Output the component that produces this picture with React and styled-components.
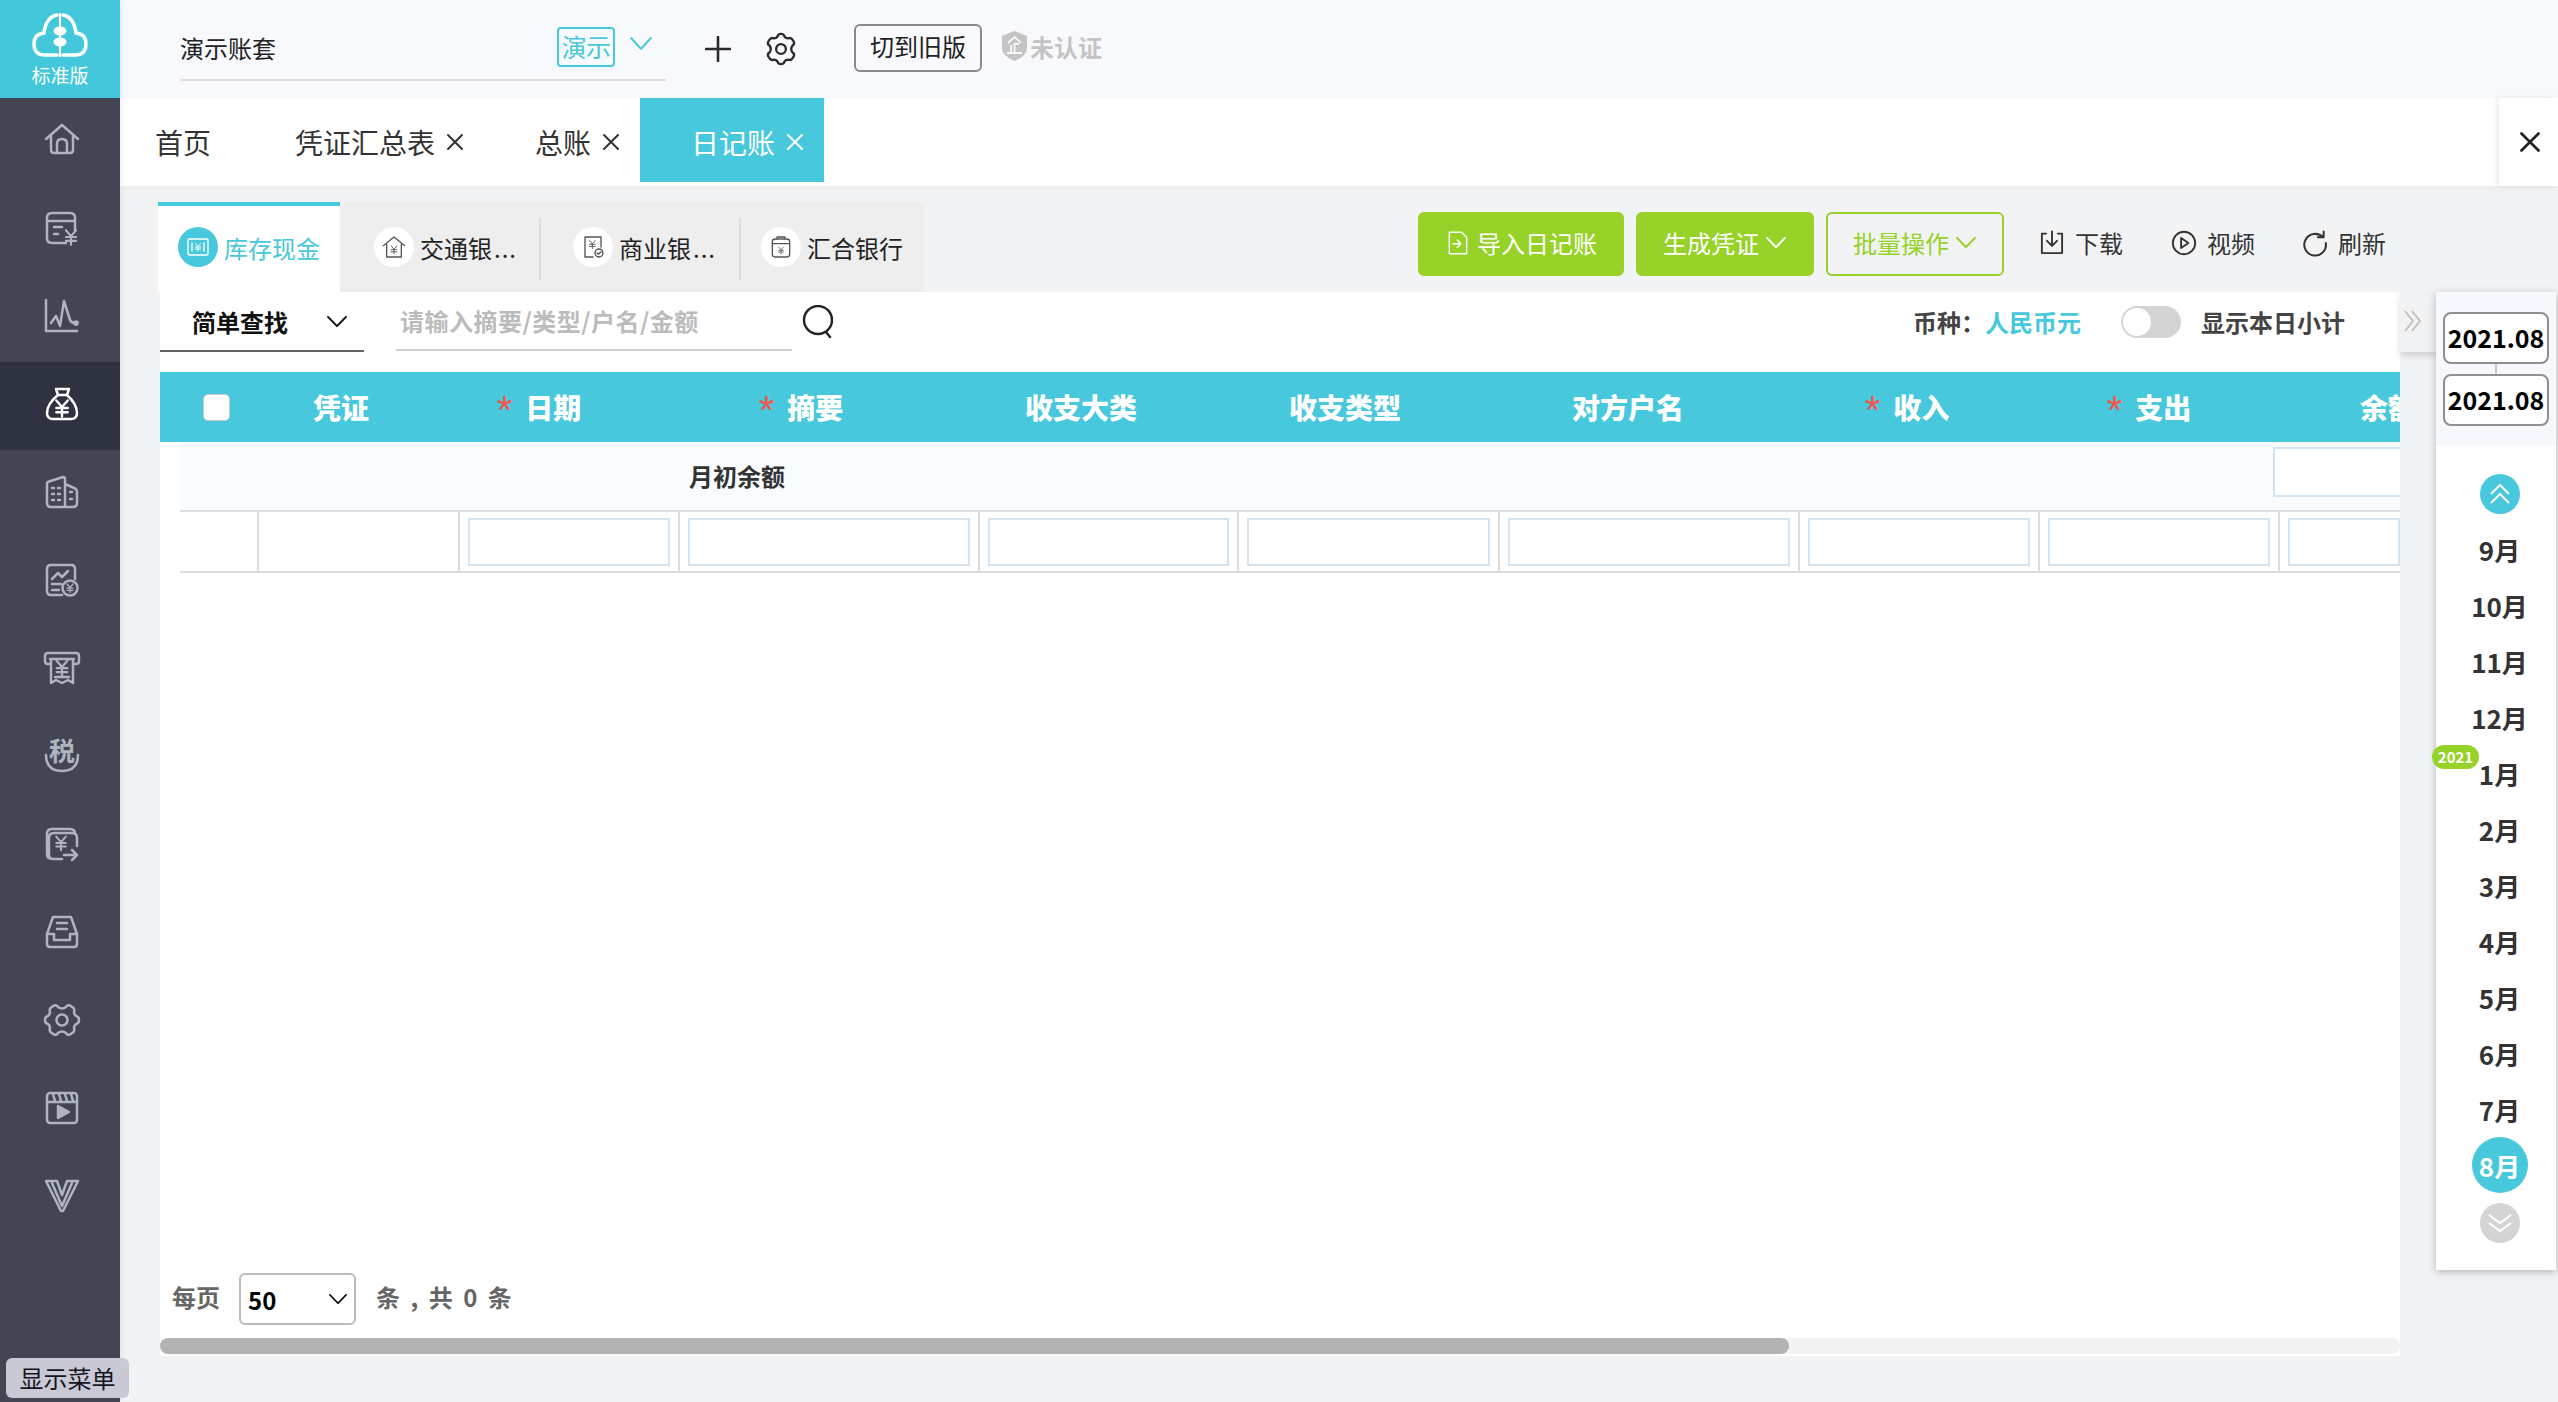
import React from 'react';
import styled, { createGlobalStyle } from 'styled-components';

const TEAL = '#47c8dc';
const GREEN = '#96d227';

const Global = createGlobalStyle`
  html, body { margin: 0; padding: 0; background: #f2f3f5; }
  * { box-sizing: border-box; }
  body { font-family: "Noto Sans CJK SC", "Noto Sans", sans-serif; color: #333; }
`;

const Page = styled.div`
  position: relative;
  display: flex;
  width: 2558px;
  height: 1402px;
  overflow: hidden;
  background: #f2f3f5;
`;

/* ---------- sidebar ---------- */
const Sidebar = styled.aside`
  width: 120px;
  flex: none;
  background: #434454;
  display: flex;
  flex-direction: column;
  box-shadow: 2px 0 6px rgba(0, 0, 0, 0.06);
  z-index: 2;
`;
const LogoBox = styled.div`
  height: 98px;
  background: #43c7db;
  color: #fff;
  display: flex;
  flex-direction: column;
  align-items: center;
  padding-top: 13px;
`;
const LogoText = styled.div`
  font-size: 19px;
  line-height: 24px;
  margin-top: 6px;
`;
const NavItem = styled.div`
  height: 88px;
  display: flex;
  align-items: center;
  justify-content: center;
  padding: 0 0 4px 3px;
  background: ${(p) => (p.$active ? '#2f3240' : 'transparent')};
  color: ${(p) => (p.$active ? '#ffffff' : '#aeb4c0')};
`;
const ShowMenu = styled.div`
  position: absolute;
  left: 6px;
  top: 1358px;
  width: 123px;
  height: 40px;
  border-radius: 6px;
  background: #c9c9d5;
  color: #15151f;
  font-size: 24px;
  line-height: 40px;
  text-align: center;
  z-index: 3;
`;

/* ---------- main ---------- */
const Main = styled.div`
  flex: 1;
  min-width: 0;
  display: flex;
  flex-direction: column;
`;
const TopBar = styled.header`
  height: 98px;
  flex: none;
  background: #f8f9fd;
  display: flex;
  align-items: center;
  padding-left: 60px;
  color: #222;
`;
const Account = styled.div`
  width: 486px;
  height: 66px;
  border-bottom: 2px solid #dcdcdc;
  display: flex;
  align-items: center;
  font-size: 24px;
  margin-bottom: 2px;
`;
const AccountName = styled.span`
  flex: 1;
`;
const DemoBadge = styled.span`
  width: 58px;
  height: 40px;
  border: 2px solid ${TEAL};
  border-radius: 4px;
  color: ${TEAL};
  font-size: 25px;
  line-height: 34px;
  text-align: center;
  letter-spacing: -0.5px;
`;
const AccountChevron = styled.span`
  display: flex;
  width: 51px;
  justify-content: center;
  color: ${TEAL};
  padding-bottom: 8px;
`;
const TopIcon = styled.span`
  display: flex;
  margin-left: ${(p) => p.$ml}px;
  color: #2b2b2b;
`;
const OldButton = styled.div`
  margin-left: 57px;
  width: 128px;
  height: 48px;
  border: 2px solid #8a8a8a;
  border-radius: 6px;
  font-size: 24px;
  line-height: 40px;
  text-align: center;
  margin-bottom: 2px;
`;
const Cert = styled.div`
  margin-left: 20px;
  display: flex;
  align-items: center;
  gap: 3px;
  color: #c4c4c4;
  font-size: 24px;
  font-weight: 700;
  padding-bottom: 6px;
`;

const TabBar = styled.nav`
  position: relative;
  height: 88px;
  flex: none;
  background: #fff;
  display: flex;
  align-items: flex-start;
  box-shadow: 0 2px 6px rgba(0, 0, 0, 0.04);
  z-index: 1;
`;
const PageTab = styled.div`
  height: 84px;
  width: ${(p) => p.$w}px;
  padding-left: ${(p) => p.$pl}px;
  padding-top: 3px;
  display: flex;
  align-items: center;
  gap: 11px;
  font-size: 28px;
  background: ${(p) => (p.$active ? TEAL : 'transparent')};
  color: ${(p) => (p.$active ? '#fff' : '#333')};
`;
const TabClose = styled.div`
  margin-left: auto;
  width: 59px;
  height: 88px;
  display: flex;
  align-items: center;
  justify-content: center;
  color: #222;
  padding-left: 2px;
  box-shadow: -3px 0 5px rgba(0, 0, 0, 0.07);
`;

const Content = styled.div`
  flex: 1;
  min-height: 0;
  padding: 16px 0 0 38px;
  display: flex;
  flex-direction: column;
`;
const ToolRow = styled.div`
  width: 2242px;
  height: 90px;
  flex: none;
  display: flex;
  align-items: flex-start;
`;
const SubTabs = styled.div`
  width: 766px;
  height: 90px;
  background: #eeeeee;
  display: flex;
`;
const SubTab = styled.div`
  width: ${(p) => p.$w}px;
  height: 90px;
  padding-left: ${(p) => p.$pl}px;
  display: flex;
  align-items: center;
  gap: 6px;
  font-size: 24px;
  color: ${(p) => (p.$active ? TEAL : '#222')};
  background: ${(p) => (p.$active ? '#fff' : 'transparent')};
  border-top: 4px solid ${(p) => (p.$active ? TEAL : 'transparent')};
  padding-bottom: 4px;
  white-space: nowrap;
`;
const Dots = styled.span`
  letter-spacing: 1px;
  margin-left: -4px;
`;
const TabDivider = styled.span`
  width: 2px;
  height: 62px;
  flex: none;
  margin-top: 16px;
  background: #dcdcdc;
`;
const TabIconCircle = styled.span`
  width: 40px;
  height: 40px;
  flex: none;
  border-radius: 50%;
  display: flex;
  align-items: center;
  justify-content: center;
  background: ${(p) => (p.$active ? TEAL : '#fff')};
  color: ${(p) => (p.$active ? '#fff' : '#555')};
`;
const Actions = styled.div`
  margin-left: auto;
  padding: 10px 14px 0 0;
  display: flex;
  align-items: center;
  height: 74px;
`;
const Primary = styled.div`
  width: ${(p) => p.$w}px;
  height: 64px;
  margin-right: 12px;
  padding-bottom: 3px;
  border-radius: 6px;
  background: ${(p) => (p.$outline ? 'transparent' : GREEN)};
  border: 2px solid ${GREEN};
  color: ${(p) => (p.$outline ? GREEN : '#fff')};
  font-size: 24px;
  display: flex;
  align-items: center;
  justify-content: center;
  gap: 6px;
`;
const PlainAction = styled.div`
  margin-left: ${(p) => p.$ml}px;
  padding-bottom: 3px;
  display: flex;
  align-items: center;
  gap: 10px;
  font-size: 24px;
  color: #333;
`;

const BodyRow = styled.div`
  flex: 1;
  min-height: 0;
  display: flex;
  align-items: flex-start;
  padding-left: 2px;
`;
const Panel = styled.section`
  width: 2240px;
  height: 1064px;
  flex: none;
  background: #fff;
  display: flex;
  flex-direction: column;
  overflow: hidden;
`;
const SearchRow = styled.div`
  height: 80px;
  flex: none;
  display: flex;
  align-items: flex-start;
  font-weight: 700;
  font-size: 24px;
`;
const ModeSelect = styled.div`
  width: 204px;
  height: 60px;
  border-bottom: 2px solid #666;
  padding: 0 16px 0 32px;
  display: flex;
  align-items: center;
  justify-content: space-between;
  color: #111;
`;
const SearchInput = styled.div`
  margin-left: 32px;
  width: 396px;
  height: 59px;
  border-bottom: 2px solid #d0d0d0;
  padding-left: 4px;
  display: flex;
  align-items: center;
  color: #bcbcbc;
  white-space: nowrap;
  letter-spacing: 0.5px;
`;
const SearchIcon = styled.span`
  display: flex;
  margin: 13px 0 0 10px;
  color: #222;
`;
const Currency = styled.div`
  margin: 12px 0 0 auto;
  display: flex;
  align-items: center;
  height: 34px;
  color: #444;
  white-space: nowrap;
  padding-right: 55px;
`;
const CurrencyValue = styled.span`
  color: ${TEAL};
`;
const Toggle = styled.span`
  position: relative;
  width: 60px;
  height: 32px;
  margin: 1px 20px 0 40px;
  border-radius: 16px;
  background: #d4d4d4;
`;
const ToggleKnob = styled.span`
  position: absolute;
  left: 2px;
  top: 2px;
  width: 28px;
  height: 28px;
  border-radius: 50%;
  background: #fff;
`;
const HeadRow = styled.div`
  height: 70px;
  flex: none;
  background: ${TEAL};
  display: grid;
  grid-template-columns: 110px 142px 260px 264px 290px 238px 328px 236px 248px 224px;
  align-items: center;
  color: #fff;
  font-size: 28px;
  font-weight: 900;
  overflow: hidden;
  white-space: nowrap;
`;
const HeadCell = styled.div`
  display: flex;
  justify-content: center;
  align-items: center;
  gap: 7px;
`;
const Star = styled.span`
  color: #f2574f;
  font-family: "Liberation Sans", sans-serif;
  font-weight: 400;
  font-size: 40px;
  line-height: 28px;
  height: 28px;
  margin: 6px 6px 0 -6px;
`;
const Check = styled.span`
  width: 27px;
  height: 27px;
  border-radius: 5px;
  background: #fff;
  border: 1px solid #c8c8c8;
  margin-left: 3px;
`;
const BalanceRow = styled.div`
  height: 68px;
  flex: none;
  margin-left: 20px;
  background: #f8fcff;
  display: flex;
  align-items: flex-start;
  overflow: hidden;
`;
const BalanceLabel = styled.div`
  margin: 16px 0 0 509px;
  font-size: 24px;
  font-weight: 700;
  color: #333;
`;
const BalanceInput = styled.div`
  margin: 5px 0 0 auto;
  width: 127px;
  height: 50px;
  border: 2px solid #d3e3ef;
  border-right: none;
  background: #fff;
`;
const EntryRow = styled.div`
  height: 63px;
  flex: none;
  margin-left: 20px;
  border-top: 2px solid #ddd;
  border-bottom: 2px solid #ddd;
  display: grid;
  grid-template-columns: 79px 201px 220px 300px 259px 261px 300px 240px 240px 120px;
  overflow: hidden;
`;
const EntryCell = styled.div`
  border-right: 2px solid #ddd;
  padding: 6px 8px;
  &:first-child { padding: 0; }
  &:last-child { border-right: none; padding-right: 0; }
`;
const CellInput = styled.div`
  height: 48px;
  border: 2px solid #d3e3ef;
  background: #fff;
`;
const Spacer = styled.div`
  flex: 1;
`;
const Pager = styled.div`
  height: 52px;
  flex: none;
  display: flex;
  align-items: center;
  padding-left: 12px;
  font-size: 24px;
  font-weight: 700;
  color: #666;
  white-space: nowrap;
`;
const PageSelect = styled.div`
  width: 117px;
  height: 52px;
  margin: 0 20px 0 19px;
  border: 2px solid #bbb;
  border-radius: 6px;
  padding: 0 6px 0 7px;
  display: flex;
  align-items: center;
  justify-content: space-between;
  color: #000;
`;
const PagerText = styled.span`
  word-spacing: 4px;
  letter-spacing: 0.5px;
  margin-top: -5px;
`;
const PagerLabel = styled.span`
  margin-top: -5px;
`;
const ScrollTrack = styled.div`
  height: 16px;
  flex: none;
  margin-top: 13px;
  margin-bottom: 2px;
  border-radius: 8px;
  background: #f3f3f3;
`;
const ScrollThumb = styled.div`
  width: 1629px;
  height: 16px;
  border-radius: 8px;
  background: #b3b3b3;
`;
const Gutter = styled.div`
  width: 36px;
  flex: none;
  align-self: flex-start;
  height: 60px;
  background: #f1f2f4;
  color: #bdbdbd;
  display: flex;
  justify-content: flex-start;
  padding: 17px 0 0 3px;
  box-shadow: 0 4px 6px rgba(0, 0, 0, 0.14);
`;
const Calendar = styled.aside`
  position: relative;
  width: 120px;
  height: 978px;
  flex: none;
  background: #fff;
  box-shadow: 0 2px 8px rgba(0, 0, 0, 0.25);
  display: flex;
  flex-direction: column;
  align-items: center;
`;
const DateBox = styled.div`
  width: 100%;
  height: 154px;
  flex: none;
  background: #f7f8fd;
  padding: 20px 7px 0;
  display: flex;
  flex-direction: column;
  align-items: center;
`;
const DateInput = styled.div`
  width: 106px;
  height: 52px;
  border: 2px solid #8f8f8f;
  border-radius: 8px;
  background: #fff;
  color: #000;
  font-size: 25px;
  font-weight: 700;
  line-height: 46px;
  text-align: center;
  white-space: nowrap;
`;
const DateLink = styled.span`
  width: 2px;
  height: 10px;
  background: #c9c9c9;
`;
const MonthColumn = styled.div`
  padding-left: 7px;
  display: flex;
  flex-direction: column;
  align-items: center;
`;
const RoundBtn = styled.div`
  width: 40px;
  height: 40px;
  flex: none;
  margin-top: ${(p) => p.$mt}px;
  border-radius: 50%;
  background: ${(p) => p.$bg};
  color: #fff;
  display: flex;
  align-items: center;
  justify-content: center;
`;
const MonthList = styled.div`
  margin-top: 7px;
  display: flex;
  flex-direction: column;
  align-items: center;
`;
const Month = styled.div`
  width: 56px;
  height: 56px;
  border-radius: 50%;
  display: flex;
  align-items: center;
  justify-content: center;
  font-size: 26px;
  font-weight: 700;
  white-space: nowrap;
  background: ${(p) => (p.$active ? TEAL : 'transparent')};
  color: ${(p) => (p.$active ? '#fff' : '#333')};
`;
const YearBadge = styled.div`
  position: absolute;
  left: -4px;
  top: 453px;
  width: 47px;
  height: 24px;
  border-radius: 12px;
  background: ${GREEN};
  color: #fff;
  font-size: 15px;
  font-weight: 700;
  line-height: 23px;
  text-align: center;
`;

/* ---------- icons ---------- */
const Svg = ({ size = 36, sw = 2.5, children, w, h, vb, rotate }) => (
  <svg width={w || size} height={h || size} viewBox={vb || '0 0 36 36'} fill="none" stroke="currentColor"
    strokeWidth={sw} strokeLinecap="round" strokeLinejoin="round" overflow="visible"
    transform={rotate ? `rotate(${rotate})` : undefined}>
    {children}
  </svg>
);
const Yen = ({ x = 18, y = 18, s = 1 }) => (
  <path transform={`translate(${x} ${y}) scale(${s})`} d="M-6 -8 L0 -1 L6 -8 M0 -1 V9 M-6 0 H6 M-6 4.5 H6" />
);
const Home = () => (
  <Svg><path d="M2 17 L18 3 L34 17 M7 14 V28 Q7 31 10 31 H26 Q29 31 29 28 V14 M13 31 V22 Q13 17 18 17 Q23 17 23 22 V31" /></Svg>
);
const CardYen = () => (
  <Svg><path d="M22 33 H8 Q3 33 3 28 V8 Q3 3 8 3 H26 Q31 3 31 8 V21 M3 11 H31 M10 17 H18 M10 24 H14" /><Yen x={27} y={27} s={0.85} /></Svg>
);
const Pulse = () => (
  <Svg><path d="M2 2 V33 H33 M7 25 L12 18 L16 28 L20 3 L26 22 Q27 25 33 25" /><circle cx="32" cy="25" r="1.6" fill="currentColor" /></Svg>
);
const Bag = () => (
  <Svg><path d="M12 3 H25 L23 9 H14 Z M14 9 Q3 18 3 27 Q3 33 9 33 H27 Q33 33 33 27 Q33 18 23 9" /><Yen x={18} y={22} s={0.95} /></Svg>
);
const Buildings = () => (
  <Svg><path d="M3 10 Q3 8 5 7.5 L19 3 Q21 3 21 5 V33 H7 Q3 33 3 29 Z M21 10 L30 14 Q33 15 33 18 V29 Q33 33 29 33 H21 M8 14 H10 M14 14 H16 M8 20 H10 M14 20 H16 M8 26 H10 M14 26 H16 M26 18 H28 M26 25 H28" /></Svg>
);
const Report = () => (
  <Svg><path d="M18 33 H7 Q3 33 3 29 V7 Q3 3 7 3 H27 Q31 3 31 7 V17 M8 17 L14 11 L18 15 L24 9 M8 22 H17 M8 28 H15" /><circle cx="26" cy="26" r="7.5" /><Yen x={26} y={26} s={0.5} /></Svg>
);
const Receipt = () => (
  <Svg><path d="M6 14 H4 Q1 14 1 11 V6 Q1 3 4 3 H32 Q35 3 35 6 V11 Q35 14 32 14 H30 M6 9 H30 M7 9 V33 L12 30 L18 33 L24 30 L29 33 V9" /><Yen x={18} y={18} s={0.9} /><path d="M11 27 H25" /></Svg>
);
const TaxChar = styled.text`
  font-size: 26px;
  font-weight: 700;
  fill: currentColor;
  stroke: none;
  font-family: "Noto Sans CJK SC", sans-serif;
`;
const Tax = () => (
  <Svg><TaxChar x="18" y="23" textAnchor="middle">税</TaxChar><path d="M2 17 Q2 33 18 33 Q34 33 34 17" /></Svg>
);
const Transfer = () => (
  <Svg><path d="M9 33 Q3 33 3 28 V8 Q3 3 8 3 H26 Q31 3 31 8 M9 33 Q5 33 5 28 V12 Q5 7 10 7 H28 Q33 7 33 12 V20 M18 33 H9" /><Yen x={17} y={17} s={0.8} /><path d="M20 29 H33 M28 24 L33 29 L28 34" /></Svg>
);
const Tray = () => (
  <Svg><path d="M3 20 L9 3 H27 L33 20 V30 Q33 33 30 33 H6 Q3 33 3 30 Z M3 20 H10 V26 H26 V20 H33 M13 9 H23 M13 15 H23" /></Svg>
);
const Gear = ({ size = 36, sw = 2.5, rotate }) => (
  <Svg size={size} sw={sw} rotate={rotate}>
    <path d="M10 3.5 Q13 2.5 14 5 Q18 8 22 5 Q23 2.5 26 3.5 L29 5.5 Q31 7 30 10 Q30 13 33 14.5 Q35 15 35 18 Q35 21 33 21.5 Q30 23 30 26 Q31 29 29 30.5 L26 32.5 Q23 33.5 22 31 Q18 28 14 31 Q13 33.5 10 32.5 L7 30.5 Q5 29 6 26 Q6 23 3 21.5 Q1 21 1 18 Q1 15 3 14.5 Q6 13 6 10 Q5 7 7 5.5 Z" />
    <circle cx="18" cy="18" r="5.5" />
  </Svg>
);
const Clapper = () => (
  <Svg><rect x="3" y="3" width="30" height="30" rx="3" /><path d="M3 12 H33 M9 4 L11 11 M15 4 L17 11 M21 4 L23 11 M27 4 L29 11" /><path d="M14 16 L25 22 L14 28 Z" fill="currentColor" /></Svg>
);
const VLogo = () => (
  <Svg><path d="M2 3 H13 L18 17 L23 3 H34 L19 33 H17 Z M8 5 L18 28 L28 5" /></Svg>
);
const Cloud = () => (
  <svg width="56" height="44" viewBox="0 0 56 44" fill="none" stroke="#fff" strokeWidth="3.4" strokeLinecap="round">
    <path d="M25 42 H13 Q2 42 2 31 Q2 21 12 20 Q14 4 25 2 M31 2 Q42 4 44 20 Q54 21 54 31 Q54 42 43 42 H31" />
    <path d="M28 1 V43" strokeWidth="2.2" />
    <ellipse cx="28" cy="18" rx="6.5" ry="4.6" fill="#fff" stroke="none" />
    <ellipse cx="28" cy="29" rx="6.5" ry="4.6" fill="#fff" stroke="none" />
  </svg>
);
const Chevron = ({ w = 22, h = 14, sw = 2 }) => (
  <svg width={w} height={h} viewBox="0 0 22 14" fill="none" stroke="currentColor" strokeWidth={sw} strokeLinecap="round" strokeLinejoin="round" preserveAspectRatio="none">
    <path d="M2 2 L11 12 L20 2" />
  </svg>
);
const Plus = () => (
  <svg width="26" height="26" viewBox="0 0 26 26" stroke="currentColor" strokeWidth="2.6" strokeLinecap="round"><path d="M13 1 V25 M1 13 H25" /></svg>
);
const Cross = ({ s = 18, sw = 2 }) => (
  <svg width={s} height={s} viewBox="0 0 18 18" stroke="currentColor" strokeWidth={sw} strokeLinecap="round"><path d="M2 2 L16 16 M16 2 L2 16" /></svg>
);
const Shield = () => (
  <svg width="25" height="30" viewBox="0 0 25 30">
    <path d="M12.5 0 L25 5 V17 Q25 25 12.5 30 Q0 25 0 17 V5 Z" fill="#c4c4c4" />
    <path d="M6 12 L12.5 6 L19 12 M9 22 V14 M12.5 22 V13 H17 M5 22 H20" fill="none" stroke="#f8f9fd" strokeWidth="1.8" />
  </svg>
);
const ImportIcon = () => (
  <Svg size={26} sw={2}>
    <path d="M10 33 H6 V3 H23 L30 10 V33 H10 M11 19 H21 M17 14 L22 19 L17 24" />
  </Svg>
);
const DownloadIcon = () => (
  <Svg size={26} sw={2.6}><path d="M10 5 H4 V32 H32 V5 H26 M18 2 V22 M11 15 L18 22 L25 15" /></Svg>
);
const PlayIcon = () => (
  <Svg size={26} sw={2.6}><circle cx="18" cy="18" r="15.5" /><path d="M14 11 L24 18 L14 25 Z" /></Svg>
);
const RefreshIcon = () => (
  <Svg size={26} sw={2.8}><path d="M29 10 A15 15 0 1 0 33 18 M30 2 V10 H22" /></Svg>
);
const SearchGlyph = () => (
  <svg width="34" height="34" viewBox="0 0 34 34" fill="none" stroke="currentColor" strokeWidth="2.4" strokeLinecap="round"><circle cx="16" cy="15" r="14" /><path d="M24 27 L28 32" /></svg>
);
const DoubleUp = () => (
  <svg width="22" height="22" viewBox="0 0 22 22" fill="none" stroke="currentColor" strokeWidth="2"><path d="M2 11 L11 2 L20 11 M2 20 L11 11 L20 20" /></svg>
);
const DoubleDown = () => (
  <svg width="26" height="20" viewBox="0 0 26 20" fill="none" stroke="currentColor" strokeWidth="2"><path d="M2 2 L13 10 L24 2 M2 10 L13 18 L24 10" /></svg>
);
const DoubleRight = () => (
  <svg width="20" height="24" viewBox="0 0 20 24" fill="none" stroke="currentColor" strokeWidth="1.8"><path d="M2 2 L10 12 L2 22 M9 2 L17 12 L9 22" /></svg>
);
const CashIcon = () => (
  <Svg size={24} sw={2}><rect x="3" y="6" width="30" height="24" rx="2" /><path d="M9 12 V24 M27 12 V24" /><Yen x={18} y={18} s={0.7} /></Svg>
);
const HouseYen = () => (
  <Svg size={24} sw={2}><path d="M2 16 L18 3 L34 16 M7 14 V33 H29 V14" /><Yen x={18} y={22} s={0.7} /></Svg>
);
const BillIcon = () => (
  <Svg size={24} sw={2}><path d="M18 33 H6 V3 H30 V18" /><Yen x={17} y={14} s={0.7} /><circle cx="27" cy="27" r="6" /><path d="M24 27 L26 29 L30 25" /></Svg>
);
const BoxYen = () => (
  <Svg size={24} sw={2}><rect x="5" y="6" width="26" height="27" rx="4" /><path d="M5 13 H31 M12 6 V3 H24 V6" /><Yen x={18} y={23} s={0.6} /></Svg>
);

const NAV = [Home, CardYen, Pulse, Bag, Buildings, Report, Receipt, Tax, Transfer, Tray, Gear, Clapper, VLogo];
const HEADS = [
  { t: '凭证' }, { t: '日期', req: 1 }, { t: '摘要', req: 1 }, { t: '收支大类' }, { t: '收支类型' },
  { t: '对方户名' }, { t: '收入', req: 1 }, { t: '支出', req: 1 }, { t: '余额' },
];
const MONTHS = ['9月', '10月', '11月', '12月', '1月', '2月', '3月', '4月', '5月', '6月', '7月', '8月'];

export default function App() {
  return (
    <Page>
      <Global />
      <Sidebar>
        <LogoBox>
          <Cloud />
          <LogoText>标准版</LogoText>
        </LogoBox>
        {NAV.map((Icon, i) => (
          <NavItem key={i} $active={i === 3}><Icon /></NavItem>
        ))}
      </Sidebar>
      <ShowMenu>显示菜单</ShowMenu>
      <Main>
        <TopBar>
          <Account>
            <AccountName>演示账套</AccountName>
            <DemoBadge>演示</DemoBadge>
            <AccountChevron><Chevron w={24} h={15} /></AccountChevron>
          </Account>
          <TopIcon $ml={39}><Plus /></TopIcon>
          <TopIcon $ml={34}><Gear size={32} sw={2.6} rotate={90} /></TopIcon>
          <OldButton>切到旧版</OldButton>
          <Cert><Shield />未认证</Cert>
        </TopBar>
        <TabBar>
          <PageTab $w={175} $pl={35}>首页</PageTab>
          <PageTab $w={240} $pl={0}>凭证汇总表<Cross s={18} /></PageTab>
          <PageTab $w={105} $pl={0}>总账<Cross s={18} /></PageTab>
          <PageTab $w={184} $pl={51} $active>日记账<Cross s={18} /></PageTab>
          <TabClose><Cross s={22} sw={2.2} /></TabClose>
        </TabBar>
        <Content>
          <ToolRow>
            <SubTabs>
              <SubTab $w={182} $pl={20} $active><TabIconCircle $active><CashIcon /></TabIconCircle>库存现金</SubTab>
              <SubTab $w={199} $pl={34}><TabIconCircle><HouseYen /></TabIconCircle>交通银<Dots>...</Dots></SubTab>
              <TabDivider />
              <SubTab $w={198} $pl={32}><TabIconCircle><BillIcon /></TabIconCircle>商业银<Dots>...</Dots></SubTab>
              <TabDivider />
              <SubTab $w={183} $pl={20}><TabIconCircle><BoxYen /></TabIconCircle>汇合银行</SubTab>
            </SubTabs>
            <Actions>
              <Primary $w={206}><ImportIcon />导入日记账</Primary>
              <Primary $w={178}>生成凭证<Chevron w={22} h={13} /></Primary>
              <Primary $w={178} $outline>批量操作<Chevron w={22} h={13} /></Primary>
              <PlainAction $ml={23}><DownloadIcon />下载</PlainAction>
              <PlainAction $ml={48}><PlayIcon />视频</PlainAction>
              <PlainAction $ml={47}><RefreshIcon />刷新</PlainAction>
            </Actions>
          </ToolRow>
          <BodyRow>
            <Panel>
              <SearchRow>
                <ModeSelect>简单查找<Chevron w={22} h={13} /></ModeSelect>
                <SearchInput>请输入摘要/类型/户名/金额</SearchInput>
                <SearchIcon><SearchGlyph /></SearchIcon>
                <Currency>
                  币种：<CurrencyValue>人民币元</CurrencyValue>
                  <Toggle><ToggleKnob /></Toggle>
                  显示本日小计
                </Currency>
              </SearchRow>
              <HeadRow>
                <HeadCell><Check /></HeadCell>
                {HEADS.map((h) => (
                  <HeadCell key={h.t}>{h.req ? <Star>*</Star> : null}{h.t}</HeadCell>
                ))}
              </HeadRow>
              <BalanceRow>
                <BalanceLabel>月初余额</BalanceLabel>
                <BalanceInput />
              </BalanceRow>
              <EntryRow>
                <EntryCell />
                <EntryCell />
                {[0, 1, 2, 3, 4, 5, 6, 7].map((i) => (
                  <EntryCell key={i}><CellInput /></EntryCell>
                ))}
              </EntryRow>
              <Spacer />
              <Pager>
                <PagerLabel>每页</PagerLabel>
                <PageSelect>50<Chevron w={20} h={12} sw={1.8} /></PageSelect>
                <PagerText>条 , 共 0 条</PagerText>
              </Pager>
              <ScrollTrack><ScrollThumb /></ScrollTrack>
            </Panel>
            <Gutter><DoubleRight /></Gutter>
            <Calendar>
              <DateBox>
                <DateInput>2021.08</DateInput>
                <DateLink />
                <DateInput>2021.08</DateInput>
              </DateBox>
              <MonthColumn>
                <RoundBtn $mt={28} $bg={TEAL}><DoubleUp /></RoundBtn>
                <MonthList>
                  {MONTHS.map((m) => (
                    <Month key={m} $active={m === '8月'}>{m}</Month>
                  ))}
                </MonthList>
                <RoundBtn $mt={10} $bg="#d4d4d4"><DoubleDown /></RoundBtn>
              </MonthColumn>
              <YearBadge>2021</YearBadge>
            </Calendar>
          </BodyRow>
        </Content>
      </Main>
    </Page>
  );
}
